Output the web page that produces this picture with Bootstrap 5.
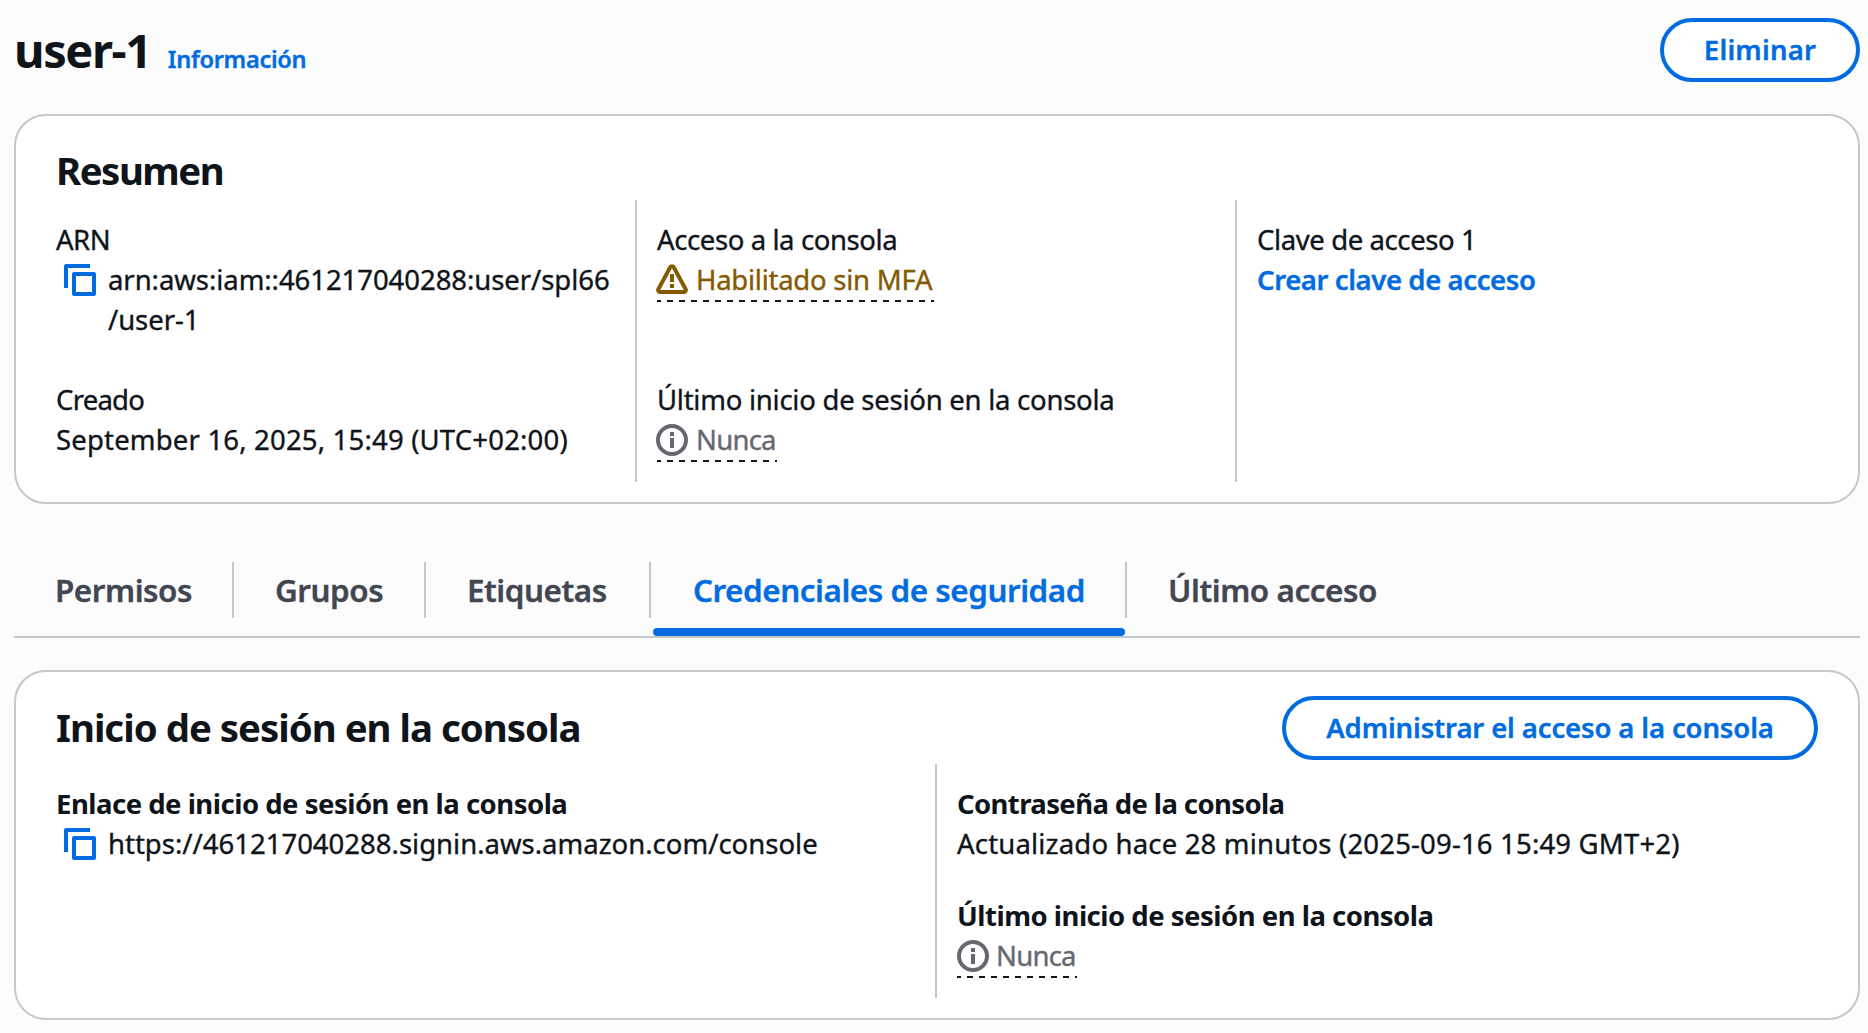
<!DOCTYPE html>
<html lang="es">
<head>
<meta charset="utf-8">
<meta name="viewport" content="width=device-width, initial-scale=1">
<title>user-1 | IAM</title>
<link href="https://cdn.jsdelivr.net/npm/bootstrap@5.3.0/dist/css/bootstrap.min.css" rel="stylesheet">
<style>
  :root { --blue: #006ce0; --ink: #0f141a; --line: #c6c6cd; --muted: #656871; --warn: #855900; }
  body { font-family: "Noto Sans", "Open Sans", sans-serif; font-size: 27.5px; line-height: 40px; color: var(--ink); background: #fcfcfd; overflow: hidden; white-space: nowrap; -webkit-text-stroke: .35px; }
  .page { padding: 18px 8px 0 14px; }
  h1, h2 { font-weight: 700; margin: 0; -webkit-text-stroke: 0; }
  h1 { font-size: 47px; line-height: 60px; letter-spacing: -1.4px; }
  h2 { font-size: 38.4px; line-height: 48px; letter-spacing: -1px; }
  .fw-bold { -webkit-text-stroke: 0; }
  a { color: var(--blue); text-decoration: none; font-weight: 600; }
  .info-link { font-size: 23.6px; letter-spacing: -.3px; margin-left: 17px; }
  .btn-pill { height: 64px; border: 4px solid var(--blue); border-radius: 32px; color: var(--blue); background: #fff; font-size: 27.5px; line-height: 40px; font-weight: 600; padding: 8px 0; }
  .btn-remove { width: 200px; letter-spacing: .2px; }
  .btn-manage { width: 536px; letter-spacing: -.13px; }
  .panel { border: 2px solid var(--line); border-radius: 32px; padding: 0 40px 20px; }
  .panel-summary { margin-top: 32px; height: 390px; padding-top: 30px; }
  .panel-signin { margin-top: 32px; height: 350px; padding-top: 24px; }
  .panel-signin h2 { margin-bottom: 2px; }
  .cols { display: grid; }
  .cols-3 { grid-template-columns: 579px 600px 1fr; height: 282px; margin-top: 6px; }
  .cols-2 { grid-template-columns: 879px 1fr; height: 234px; margin-top: 4px; }
  .col-cell { padding-top: 20px; }
  .col-cell + .col-cell { border-left: 2px solid var(--line); padding-left: 20px; }
  .pair-tall { height: 160px; }
  .pair-mid { height: 112px; }
  .copy { width: 32px; height: 32px; margin: 4px 12px 0 8px; flex: none; }
  .status { height: 42px; display: inline-block; vertical-align: top; background: repeating-linear-gradient(90deg, var(--ink) 0 4px, transparent 4px 10px, var(--ink) 10px 12px) 0 100% / 100% 2px no-repeat; }
  .status svg { width: 32px; height: 32px; display: block; margin: 4px 8px 0 -1px; flex: none; }
  .st-warn { color: var(--warn); width: 277px; }
  .st-info { color: var(--muted); width: 120px; }
  .panel-signin .status svg { margin: 4px 7px 0 0; }
  .tabs { margin-top: 58px; height: 76px; border-bottom: 2px solid var(--line); flex-wrap: nowrap; }
  .tabs .nav-link { position: relative; height: 56px; padding: 8px 0 8px 41px; border-right: 2px solid var(--line); color: #424650; font-size: 31.4px; line-height: 40px; font-weight: 600; letter-spacing: -.45px; }
  .tabs .nav-link.active { color: var(--blue); padding-left: 42px; }
  .tabs .nav-link.active::after { content: ""; position: absolute; left: 2px; right: 0; top: 66px; height: 8px; border-radius: 4px; background: var(--blue); }
  .tab-1 { width: 220px; } .tab-2 { width: 192px; } .tab-3 { width: 225px; } .tab-4 { width: 476px; }
  .tabs .tab-5 { border: 0; }
  .t-wide { letter-spacing: .18px; } .t0 { letter-spacing: 0; } .t1 { letter-spacing: -.06px; } .t3 { letter-spacing: -.25px; } .t4 { letter-spacing: -.4px; } .t5 { letter-spacing: -.5px; } .t6 { letter-spacing: -.62px; } .t7 { letter-spacing: -.75px; } .t15 { letter-spacing: -1.5px; }
</style>
<script src="https://cdn.jsdelivr.net/npm/bootstrap@5.3.0/dist/js/bootstrap.bundle.min.js"></script>
</head>
<body>
<svg class="d-none">
  <symbol id="i-copy" viewBox="0 0 32 32"><g fill="none" stroke="#006ce0" stroke-width="4" stroke-linejoin="round"><path d="M2 24V2h24"/><path d="M10 10h20v20H10z"/></g></symbol>
  <symbol id="i-warn" viewBox="0 0 32 32"><path d="M14.3 3.1a2 2 0 0 1 3.4 0l12.1 22.4a2 2 0 0 1-1.7 2.5H3.9a2 2 0 0 1-1.7-2.5z" fill="none" stroke="currentColor" stroke-width="4" stroke-linejoin="round"/><path d="M14 10h4v8h-4zM14 20h4v4h-4z" fill="currentColor"/></symbol>
  <symbol id="i-info" viewBox="0 0 32 32"><circle cx="16" cy="16" r="14" fill="none" stroke="currentColor" stroke-width="4"/><path d="M14 8h4v4h-4zM14 14h4v10h-4z" fill="currentColor"/></symbol>
</svg>
<main class="page">
  <header class="d-flex justify-content-between align-items-center">
    <div class="d-flex align-items-baseline"><h1>user-1</h1><a class="info-link" href="#">Información</a></div>
    <button class="btn btn-pill btn-remove" type="button">Eliminar</button>
  </header>

  <section class="panel panel-summary bg-white">
    <h2 class="t15">Resumen</h2>
    <div class="cols cols-3">
      <div class="col-cell">
        <div class="pair-tall">
          <div class="t5">ARN</div>
          <div class="d-flex"><svg class="copy"><use href="#i-copy"/></svg><div class="t1">arn:aws:iam::461217040288:user/spl66<br>/user-1</div></div>
        </div>
        <div class="t7">Creado</div>
        <div class="t-wide">September 16, 2025, 15:49 (UTC+02:00)</div>
      </div>
      <div class="col-cell">
        <div class="pair-tall">
          <div class="t4">Acceso a la consola</div>
          <div class="status st-warn"><div class="d-flex"><svg><use href="#i-warn"/></svg><span class="t3">Habilitado sin MFA</span></div></div>
        </div>
        <div class="t3">Último inicio de sesión en la consola</div>
        <div class="status st-info"><div class="d-flex"><svg><use href="#i-info"/></svg><span class="t7">Nunca</span></div></div>
      </div>
      <div class="col-cell">
        <div class="t4">Clave de acceso 1</div>
        <a class="t4" href="#">Crear clave de acceso</a>
      </div>
    </div>
  </section>

  <nav class="nav tabs">
    <a class="nav-link tab-1" href="#">Permisos</a>
    <a class="nav-link tab-2" href="#">Grupos</a>
    <a class="nav-link tab-3" href="#">Etiquetas</a>
    <a class="nav-link tab-4 active" href="#">Credenciales de seguridad</a>
    <a class="nav-link tab-5" href="#">Último acceso</a>
  </nav>

  <section class="panel panel-signin bg-white">
    <div class="d-flex justify-content-between align-items-center">
      <h2>Inicio de sesión en la consola</h2>
      <button class="btn btn-pill btn-manage" type="button">Administrar el acceso a la consola</button>
    </div>
    <div class="cols cols-2">
      <div class="col-cell">
        <div class="fw-bold t5">Enlace de inicio de sesión en la consola</div>
        <div class="d-flex"><svg class="copy"><use href="#i-copy"/></svg><span class="t0">https://461217040288.signin.aws.amazon.com/console</span></div>
      </div>
      <div class="col-cell">
        <div class="pair-mid">
          <div class="fw-bold t6">Contraseña de la consola</div>
          <div class="t-wide">Actualizado hace 28 minutos (2025-09-16 15:49 GMT+2)</div>
        </div>
        <div class="fw-bold t5">Último inicio de sesión en la consola</div>
        <div class="status st-info"><div class="d-flex"><svg><use href="#i-info"/></svg><span class="t7">Nunca</span></div></div>
      </div>
    </div>
  </section>
</main>
</body>
</html>
